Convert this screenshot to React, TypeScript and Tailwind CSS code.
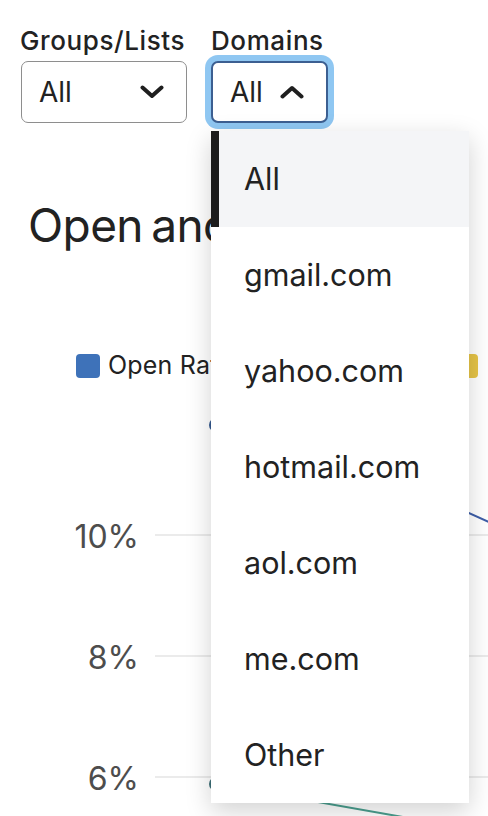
import React from "react";

function ChevronDown() {
  return (
    <svg width="24" height="14" viewBox="0 0 24 14" fill="none">
      <path d="M2.5 2.5 L12 11 L21.5 2.5" stroke="#1f1f1f" strokeWidth="4" strokeLinecap="round" strokeLinejoin="round" />
    </svg>
  );
}

function ChevronUp() {
  return (
    <svg width="24" height="14" viewBox="0 0 24 14" fill="none">
      <path d="M2.5 11.5 L12 3 L21.5 11.5" stroke="#1f1f1f" strokeWidth="4" strokeLinecap="round" strokeLinejoin="round" />
    </svg>
  );
}

const items = ["All", "gmail.com", "yahoo.com", "hotmail.com", "aol.com", "me.com", "Other"];

export default function App() {
  return (
    <div
      className="relative w-[488px] h-[816px] overflow-hidden bg-white text-[#222222]"
      style={{ fontFamily: "Inter, 'Noto Sans', sans-serif" }}
    >
      {/* Filters */}
      <div className="flex gap-[24px] pl-[20px] pt-[26px]">
        <div className="flex flex-col">
          <span className="text-[26px] leading-[30px] font-medium tracking-[0.6px] whitespace-nowrap">Groups/Lists</span>
          <div className="mt-[5px] ml-[1px] w-[166px] h-[62px] rounded-[7px] border-[1.5px] border-[#8e8e8e] flex items-center justify-between pl-[17px] pr-[22px]">
            <span className="text-[28px]">All</span>
            <ChevronDown />
          </div>
        </div>
        <div className="flex flex-col">
          <span className="text-[26px] leading-[30px] font-medium tracking-[0.6px] whitespace-nowrap">Domains</span>
          <div className="mt-[5px] w-[117px] h-[62px] rounded-[7px] border-[2px] border-[#3c5f91] shadow-[0_0_0_6px_#8fc7f2] flex items-center justify-between pl-[17px] pr-[22px] bg-white">
            <span className="text-[28px]">All</span>
            <ChevronUp />
          </div>
        </div>
      </div>

      {/* Heading */}
      <h2 className="mt-[74px] ml-[28px] text-[46px] leading-[56px] whitespace-nowrap tracking-[-0.6px] [word-spacing:-4px]">Open and Clicks</h2>

      {/* Legend */}
      <div className="mt-[101px] flex items-center h-[24px] pl-[76px] whitespace-nowrap">
        <div className="w-[378px] shrink-0 flex items-center overflow-hidden">
          <span className="w-[24px] h-[24px] shrink-0 rounded-[4px] bg-[#3e72b9]" />
          <span className="ml-[8px] text-[25px] tracking-[0.2px]">Open Rate</span>
        </div>
        <span className="w-[24px] h-[24px] shrink-0 rounded-[4px] bg-[#e6c447]" />
      </div>

      {/* Chart */}
      <svg width="488" height="438" viewBox="0 378 488 438" className="block">
        {[535, 656, 777].map((y) => (
          <line key={y} x1="155" x2="488" y1={y} y2={y} stroke="#e4e4e4" strokeWidth="1.5" />
        ))}
        <text x="139" y="548" textAnchor="end" fontSize="32" fill="#4d4d4d" fontFamily="Inter, sans-serif">10%</text>
        <text x="139" y="669" textAnchor="end" fontSize="32" fill="#4d4d4d" fontFamily="Inter, sans-serif">8%</text>
        <text x="139" y="790" textAnchor="end" fontSize="32" fill="#4d4d4d" fontFamily="Inter, sans-serif">6%</text>
        <polyline points="215,425 400,482 500,527" fill="none" stroke="#3d5ea8" strokeWidth="2" />
        <polyline points="215,784 420,820" fill="none" stroke="#4a9e8e" strokeWidth="2" />
        <circle cx="216" cy="425" r="7" fill="#34598f" />
        <circle cx="216" cy="784" r="7" fill="#3d6f78" />
      </svg>

      {/* Dropdown menu */}
      <div className="absolute left-[211px] top-[131px] w-[258px] bg-white shadow-[0_8px_24px_rgba(0,0,0,0.18)]">
        {items.map((it, i) => (
          <div
            key={it}
            className={
              i === 0
                ? "h-[96px] flex items-center bg-[#f4f5f7] border-l-[8px] border-[#1c1c1c] pl-[25px] text-[30.5px]"
                : "h-[96px] flex items-center pl-[33px] text-[30.5px]"
            }
          >
            {it}
          </div>
        ))}
      </div>
    </div>
  );
}
